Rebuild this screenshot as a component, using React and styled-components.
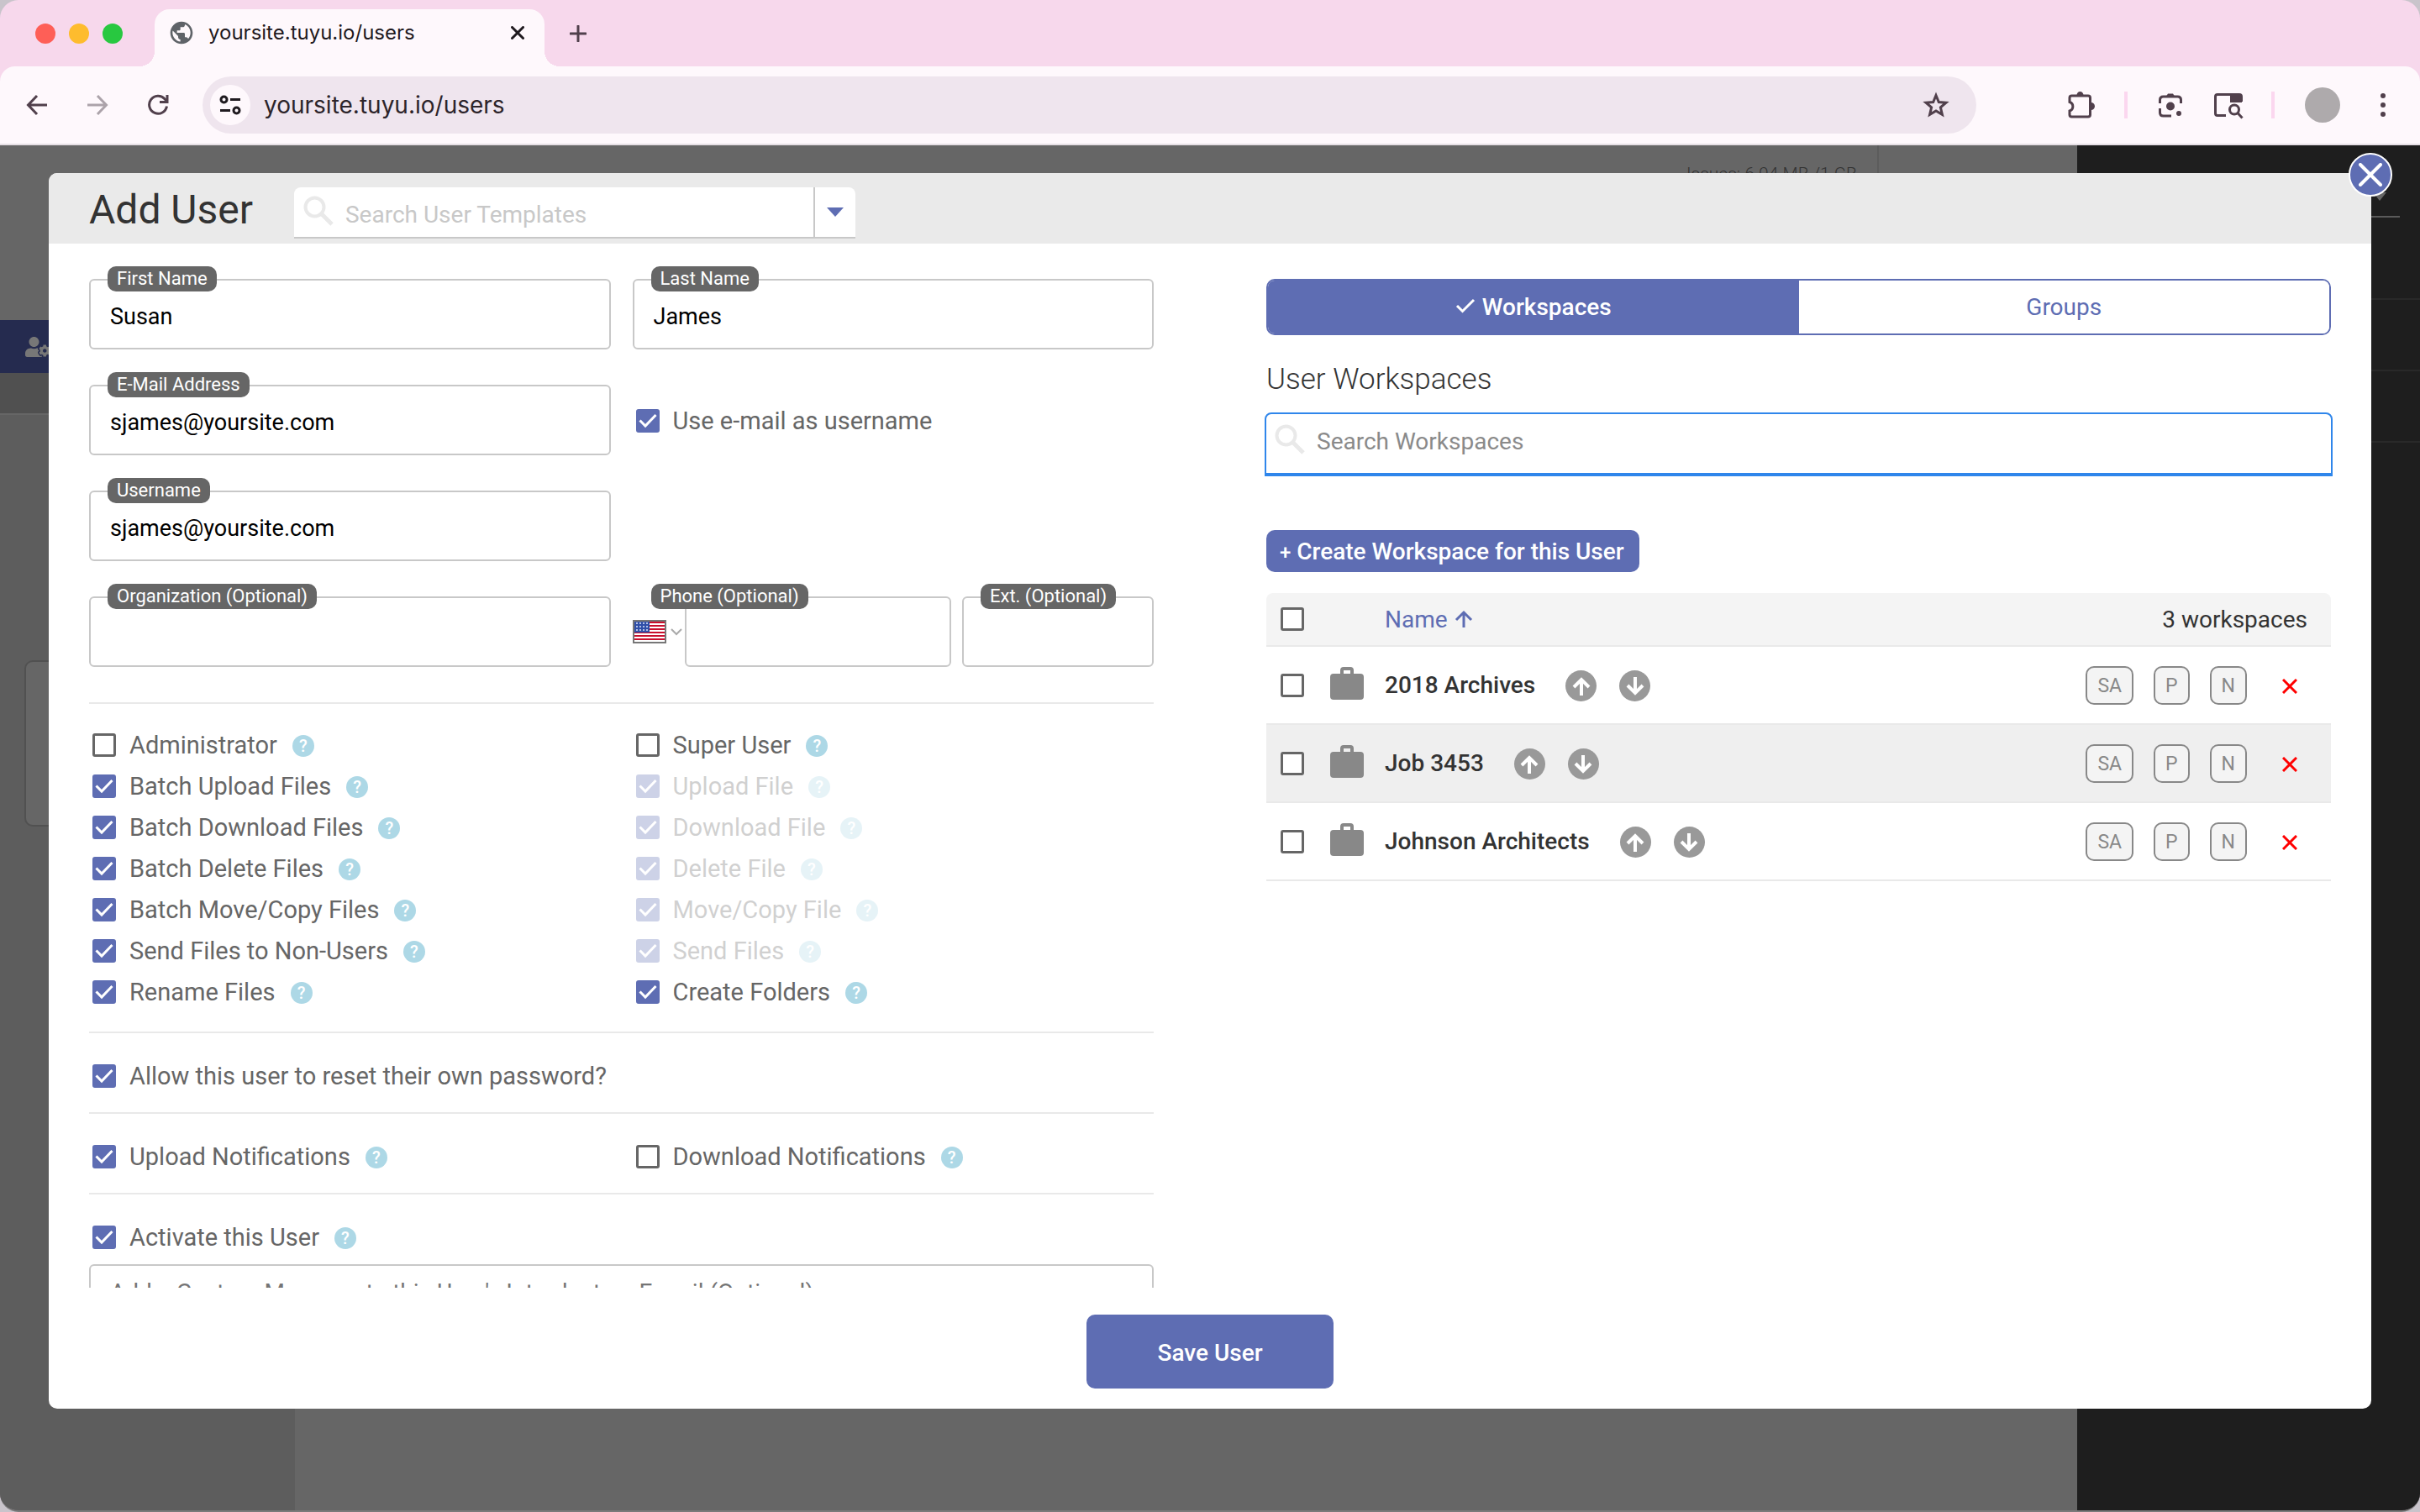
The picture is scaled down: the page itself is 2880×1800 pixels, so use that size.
import React from 'react';
import styled, { createGlobalStyle } from 'styled-components';
import { FaUserCog } from 'react-icons/fa';
import { MdPublic } from 'react-icons/md';

const permissions = [
  [
    { label: 'Administrator' },
    { label: 'Batch Upload Files', checked: true },
    { label: 'Batch Download Files', checked: true },
    { label: 'Batch Delete Files', checked: true },
    { label: 'Batch Move/Copy Files', checked: true },
    { label: 'Send Files to Non-Users', checked: true },
    { label: 'Rename Files', checked: true },
  ],
  [
    { label: 'Super User' },
    { label: 'Upload File', checked: true, disabled: true },
    { label: 'Download File', checked: true, disabled: true },
    { label: 'Delete File', checked: true, disabled: true },
    { label: 'Move/Copy File', checked: true, disabled: true },
    { label: 'Send Files', checked: true, disabled: true },
    { label: 'Create Folders', checked: true },
  ],
];

const workspaces = ['2018 Archives', 'Job 3453', 'Johnson Architects'];

export default function App() {
  return (
    <>
      <GlobalStyle />
      <BrowserWindow>
        <TabStrip />
        <Toolbar />
        <Page>
          <PageBackground />
          <Overlay>
            <AddUserModal />
          </Overlay>
        </Page>
      </BrowserWindow>
    </>
  );
}

function TabStrip() {
  return (
    <Strip>
      <Lights>
        <Light $color="#fe5f57" />
        <Light $color="#febc2e" />
        <Light $color="#28c840" />
      </Lights>
      <Tab>
        <MdPublic size={32} color="#5f6368" />
        <TabTitle>yoursite.tuyu.io/users</TabTitle>
        <IconButton aria-label="Close tab">
          <svg width="16" height="16" viewBox="0 0 16 16" stroke="#1f1a1f" strokeWidth="3" strokeLinecap="round">
            <path d="M1.500 1.500l13 13M14.500 1.500l-13 13" />
          </svg>
        </IconButton>
      </Tab>
      <NewTab aria-label="New tab">
        <svg width="20" height="20" viewBox="0 0 20 20" stroke="#51404c" strokeWidth="3" strokeLinecap="round">
          <path d="M10 1v18M1 10h18" />
        </svg>
      </NewTab>
    </Strip>
  );
}

function Toolbar() {
  return (
    <Bar>
      <NavButtons>
        <IconButton aria-label="Back">
          <svg width="26" height="26" viewBox="0 0 26 26" fill="none" stroke="#51404c" strokeWidth="3">
            <path d="M25 13H3M13 2L2.500 13 13 24" />
          </svg>
        </IconButton>
        <IconButton aria-label="Forward">
          <svg width="26" height="26" viewBox="0 0 26 26" fill="none" stroke="#aca3aa" strokeWidth="3">
            <path d="M1 13h22M13 2l10.500 11L13 24" />
          </svg>
        </IconButton>
        <IconButton aria-label="Reload">
          <svg width="26" height="26" viewBox="0 0 26 26" fill="none" stroke="#51404c" strokeWidth="3">
            <path d="M23.500 14.500A10.500 10.500 0 1 1 21 5.800L23.500 8.500" />
            <path d="M24 1v8.500h-9" />
          </svg>
        </IconButton>
      </NavButtons>
      <AddressBar>
        <SiteInfo aria-label="View site information">
          <svg width="28" height="28" viewBox="0 0 28 28" fill="none" stroke="#1f1a1f" strokeWidth="3">
            <circle cx="6.500" cy="7.500" r="3.500" />
            <path d="M14 7.500h12M2 20.500h12" />
            <circle cx="21.500" cy="20.500" r="3.500" />
          </svg>
        </SiteInfo>
        <AddressInput aria-label="Address" defaultValue="yoursite.tuyu.io/users" />
        <IconButton aria-label="Bookmark this page">
          <svg width="32" height="32" viewBox="0 0 32 32" fill="none" stroke="#51404c" strokeWidth="3">
            <path d="M16 4.500l3.300 8 8.700.7-6.600 5.700 2 8.500L16 22.900l-7.400 4.500 2-8.500L4 13.200l8.700-.7z" />
          </svg>
        </IconButton>
      </AddressBar>
      <ToolbarActions>
        <IconButton aria-label="Extensions">
          <svg width="36" height="36" viewBox="0 0 36 36">
            <path
              d="M4 9.500Q4 7 6.500 7H26q2.500 0 2.500 2.500V29.500Q28.500 32 26 32H6.500Q4 32 4 29.500V25a5.500 5.500 0 0 0 0-10.500z"
              fill="none"
              stroke="#51404c"
              strokeWidth="3"
            />
            <path d="M12.500 6.500a4 4.500 0 0 1 8 0zM29.500 15a4.500 4.500 0 0 1 0 9z" fill="#51404c" />
          </svg>
        </IconButton>
        <ToolbarRule />
        <IconButton aria-label="Search with Lens">
          <svg width="36" height="36" viewBox="-2 -2 36 36" fill="none" stroke="#51404c" strokeWidth="3">
            <path d="M3.500 14V10q0-4 4-4h17q4 0 4 4v4M3.500 20v5q0 4 4 4H17" />
            <path d="M11 5.500l2-3h6l2 3z" fill="#51404c" stroke="none" />
            <circle cx="16" cy="17.500" r="5" fill="#51404c" stroke="none" />
            <circle cx="26" cy="26" r="3" fill="#51404c" stroke="none" />
          </svg>
        </IconButton>
        <IconButton aria-label="Search side panel">
          <svg width="36" height="36" viewBox="0 0 36 36" fill="none" stroke="#51404c" strokeWidth="3">
            <path d="M15 30.500H5q-2.500 0-2.500-2.500V8q0-2.500 2.500-2.500h26q2.500 0 2.500 2.500v6" />
            <path d="M20 5h14v10H20z" fill="#51404c" stroke="none" />
            <circle cx="25" cy="23.500" r="5.500" />
            <path d="M29 27.500l5.500 6" />
          </svg>
        </IconButton>
        <ToolbarRule />
        <Avatar aria-label="Profile" />
        <IconButton aria-label="Browser menu">
          <svg width="8" height="30" viewBox="0 0 8 30" fill="#51404c">
            <circle cx="4" cy="4" r="3" />
            <circle cx="4" cy="15" r="3" />
            <circle cx="4" cy="26" r="3" />
          </svg>
        </IconButton>
      </ToolbarActions>
    </Bar>
  );
}

function PageBackground() {
  return (
    <Backdrop>
      <SideNav>
        <NavItem>
          <FaUserCog size={30} />
        </NavItem>
        <SubNav />
        <SideBody>
          <SideCard />
        </SideBody>
      </SideNav>
      <MainArea>
        <Usage>Issues: 6.04 MB /1 GB</Usage>
      </MainArea>
      <DarkPanel>
        <DarkSelect>
          <svg width="16" height="10" viewBox="0 0 16 10" fill="#666">
            <path d="M0 0h16L8 10z" />
          </svg>
        </DarkSelect>
        <DarkRow />
        <DarkRow />
        <DarkRow />
      </DarkPanel>
    </Backdrop>
  );
}

function AddUserModal() {
  return (
    <Modal role="dialog" aria-labelledby="modal-title">
      <CloseButton aria-label="Close">
        <svg width="28" height="28" viewBox="0 0 28 28" stroke="#fff" strokeWidth="4" strokeLinecap="round">
          <path d="M2 2l24 24M26 2L2 26" />
        </svg>
      </CloseButton>
      <ModalHeader>
        <ModalTitle id="modal-title">Add User</ModalTitle>
        <TemplateSearch>
          <Magnifier />
          <TemplateInput aria-label="Search User Templates" placeholder="Search User Templates" />
          <TemplateToggle aria-label="Show templates">
            <svg width="20" height="11" viewBox="0 0 20 11" fill="#5e6db3">
              <path d="M0 0h20L10 11z" />
            </svg>
          </TemplateToggle>
        </TemplateSearch>
      </ModalHeader>
      <ModalBody>
        <UserForm />
        <WorkspacePanel />
      </ModalBody>
      <ModalFooter>
        <SaveButton>Save User</SaveButton>
      </ModalFooter>
    </Modal>
  );
}

function UserForm() {
  return (
    <Form>
      <FieldGrid>
        <Field id="first-name" label="First Name" value="Susan" />
        <Field id="last-name" label="Last Name" value="James" />
        <Field id="email" label="E-Mail Address" value="sjames@yoursite.com" />
        <CheckOption id="email-username" label="Use e-mail as username" checked noHelp />
        <Field id="username" label="Username" value="sjames@yoursite.com" />
        <span />
        <Field id="organization" label="Organization (Optional)" />
        <PhoneGroup>
          <FieldLabel htmlFor="phone">Phone (Optional)</FieldLabel>
          <CountryButton aria-label="Country: United States">
            <UsFlag />
            <svg width="14" height="9" viewBox="0 0 14 9" fill="none" stroke="#aaa" strokeWidth="2">
              <path d="M1 1l6 6 6-6" />
            </svg>
          </CountryButton>
          <PhoneInput id="phone" type="tel" />
          <ExtField>
            <Field id="ext" label="Ext. (Optional)" />
          </ExtField>
        </PhoneGroup>
      </FieldGrid>

      <PermissionSection>
        {permissions.map((column, index) => (
          <div key={index}>
            {column.map((item) => (
              <CheckOption key={item.label} id={item.label.toLowerCase().replace(/\W+/g, '-')} {...item} />
            ))}
          </div>
        ))}
      </PermissionSection>

      <Section>
        <CheckOption id="reset" label="Allow this user to reset their own password?" checked noHelp />
      </Section>
      <Section>
        <CheckOption id="upload-notifications" label="Upload Notifications" checked />
        <CheckOption id="download-notifications" label="Download Notifications" />
      </Section>
      <Section>
        <CheckOption id="activate" label="Activate this User" checked />
      </Section>
      <Message
        aria-label="Custom message"
        placeholder="Add a Custom Message to this User's Introductory E-mail (Optional)"
      />
    </Form>
  );
}

function WorkspacePanel() {
  return (
    <Panel>
      <Switcher>
        <SwitchButton $active>
          <svg width="24" height="18" viewBox="0 0 24 18" fill="none" stroke="#fff" strokeWidth="3">
            <path d="M2 9l6.500 6.500L22 2" />
          </svg>
          Workspaces
        </SwitchButton>
        <SwitchButton>Groups</SwitchButton>
      </Switcher>
      <PanelTitle>User Workspaces</PanelTitle>
      <WorkspaceSearch>
        <Magnifier />
        <SearchInput aria-label="Search Workspaces" placeholder="Search Workspaces" />
      </WorkspaceSearch>
      <CreateButton>
        <Plus>+</Plus> Create Workspace for this User
      </CreateButton>
      <Table>
        <thead>
          <tr>
            <HeadCell $width={76}>
              <Check id="all" label="Select all" />
            </HeadCell>
            <HeadCell $width={65} />
            <HeadCell>
              <SortButton>
                Name
                <svg width="22" height="22" viewBox="0 0 22 22" fill="none" stroke="#5e6db3" strokeWidth="3">
                  <path d="M11 21V3M2 12l9-9 9 9" />
                </svg>
              </SortButton>
            </HeadCell>
            <HeadCell $right>3 workspaces</HeadCell>
          </tr>
        </thead>
        <tbody>
          {workspaces.map((name) => (
            <Row key={name}>
              <Cell>
                <Check id={name} label={`Select ${name}`} />
              </Cell>
              <Cell>
                <Briefcase />
              </Cell>
              <Cell>
                <NameGroup>
                  <WorkspaceName>{name}</WorkspaceName>
                  <RoundButton aria-label={`Upload to ${name}`}>
                    <svg width="22" height="22" viewBox="0 0 22 22" fill="none" stroke="#fff" strokeWidth="4">
                      <path d="M11 22V4M2 12l9-9 9 9" />
                    </svg>
                  </RoundButton>
                  <RoundButton aria-label={`Download from ${name}`}>
                    <svg width="22" height="22" viewBox="0 0 22 22" fill="none" stroke="#fff" strokeWidth="4">
                      <path d="M11 0v18M2 10l9 9 9-9" />
                    </svg>
                  </RoundButton>
                </NameGroup>
              </Cell>
              <Cell>
                <Roles>
                  <RoleButton>SA</RoleButton>
                  <RoleButton>P</RoleButton>
                  <RoleButton>N</RoleButton>
                  <RemoveButton aria-label={`Remove ${name}`}>
                    <svg width="18" height="18" viewBox="0 0 18 18" stroke="#f00" strokeWidth="3">
                      <path d="M1 1l16 16M17 1L1 17" />
                    </svg>
                  </RemoveButton>
                </Roles>
              </Cell>
            </Row>
          ))}
        </tbody>
      </Table>
    </Panel>
  );
}

function Field({ id, label, value }) {
  return (
    <FieldBox>
      <FieldLabel htmlFor={id}>{label}</FieldLabel>
      <FieldInput id={id} defaultValue={value} />
    </FieldBox>
  );
}

function Check({ id, label, checked, disabled }) {
  return (
    <CheckBox>
      <CheckInput type="checkbox" id={id} aria-label={label} defaultChecked={checked} disabled={disabled} />
      <CheckMark width="28" height="28" viewBox="0 0 28 28" fill="none" stroke="#fff" strokeWidth="3">
        <path d="M4.500 13.500l6.500 6.500L23.500 7" />
      </CheckMark>
    </CheckBox>
  );
}

function CheckOption({ id, label, checked, disabled, noHelp }) {
  return (
    <Option $disabled={disabled}>
      <Check id={id} label={label} checked={checked} disabled={disabled} />
      <OptionLabel htmlFor={id}>{label}</OptionLabel>
      {!noHelp && <HelpButton aria-label={`Help: ${label}`}>?</HelpButton>}
    </Option>
  );
}

function Magnifier() {
  return (
    <MagnifierIcon width="36" height="36" viewBox="0 0 36 36" fill="none" stroke="#e9e9e9">
      <circle cx="13.500" cy="13.500" r="11" strokeWidth="4" />
      <path d="M22 22l12 12" strokeWidth="5" />
    </MagnifierIcon>
  );
}

function Briefcase() {
  return (
    <BriefcaseIcon width="40" height="39" viewBox="0 0 40 39">
      <rect y="8" width="40" height="31" rx="4" fill="#888" />
      <path d="M14 9V4q0-2 2-2h8q2 0 2 2v5" fill="none" stroke="#888" strokeWidth="4" />
    </BriefcaseIcon>
  );
}

function UsFlag() {
  return (
    <svg width="40" height="28" viewBox="0 0 40 28">
      <rect width="40" height="28" fill="#777" />
      <rect x="2" y="2" width="36" height="24" fill="#fff" />
      {[2, 6, 10, 14, 18, 22].map((y) => (
        <rect key={y} x="2" y={y} width="36" height="2" fill="#c8102e" />
      ))}
      <rect x="2" y="2" width="18" height="13" fill="#2f4fa8" />
      {[4, 8, 12].map((y) =>
        [4, 8, 12, 16].map((x) => <circle key={`${x}-${y}`} cx={x + 1} cy={y} r="1" fill="#dfe6fa" />)
      )}
    </svg>
  );
}

const GlobalStyle = createGlobalStyle`
  * {
    box-sizing: border-box;
  }

  body {
    margin: 0;
    background: #c9c4cb;
    font-family: Roboto, 'Liberation Sans', sans-serif;
    color: #333;
  }

  button,
  input,
  textarea {
    font: inherit;
    color: inherit;
  }

  button {
    padding: 0;
    border: 0;
    background: none;
    cursor: pointer;
  }

  svg {
    display: block;
    flex: none;
  }
`;

const BrowserWindow = styled.div`
  display: flex;
  flex-direction: column;
  height: 100vh;
  overflow: hidden;
  border-bottom: 2px solid #7b7b7b;
  border-radius: 22px;
  background: #f7d8ec;
`;

const Strip = styled.div`
  display: flex;
  align-items: center;
  height: 79px;
  padding-left: 42px;
  font-family: Inter, sans-serif;
`;

const Lights = styled.div`
  display: flex;
  gap: 16px;
  margin-right: 38px;
`;

const Light = styled.span`
  width: 24px;
  height: 24px;
  border-radius: 50%;
  background: ${props => props.$color};
`;

const Tab = styled.div`
  position: relative;
  display: flex;
  align-items: center;
  align-self: flex-end;
  gap: 16px;
  width: 464px;
  height: 68px;
  padding: 0 24px 12px 16px;
  border-radius: 18px 18px 0 0;
  background: #fef8fc;

  &::before,
  &::after {
    content: '';
    position: absolute;
    bottom: 0;
    width: 18px;
    height: 18px;
  }

  &::before {
    right: 100%;
    background: radial-gradient(circle at 0 0, transparent 18px, #fef8fc 18px);
  }

  &::after {
    left: 100%;
    background: radial-gradient(circle at 100% 0, transparent 18px, #fef8fc 18px);
  }
`;

const TabTitle = styled.span`
  flex: 1;
  font-size: 24px;
  line-height: 32px;
  color: #1f1a1f;
`;

const IconButton = styled.button`
  display: grid;
  place-items: center;
  flex: none;
`;

const NewTab = styled(IconButton)`
  margin-left: 30px;
`;

const Bar = styled.div`
  display: flex;
  align-items: center;
  height: 94px;
  padding: 0 40px 0 31px;
  border-bottom: 2px solid #e6dfe5;
  border-radius: 18px 18px 0 0;
  background: #fef8fc;
`;

const NavButtons = styled.div`
  display: flex;
  gap: 46px;
  margin-right: 40px;
`;

const AddressBar = styled.div`
  display: flex;
  align-items: center;
  flex: 1;
  height: 68px;
  padding: 0 32px 0 9px;
  border-radius: 34px;
  background: #efe5ee;
`;

const SiteInfo = styled(IconButton)`
  width: 48px;
  height: 48px;
  border-radius: 50%;
  background: #fef8fc;
`;

const AddressInput = styled.input`
  flex: 1;
  min-width: 0;
  padding: 0 16px;
  border: 0;
  outline: 0;
  background: none;
  font-family: Inter, sans-serif;
  font-size: 28px;
  line-height: 36px;
  color: #2c242a;
`;

const ToolbarActions = styled.div`
  display: flex;
  align-items: center;
  gap: 33px;
  margin-left: 107px;
`;

const ToolbarRule = styled.span`
  width: 4px;
  height: 32px;
  background: #fbd7ef;
`;

const Avatar = styled.button`
  width: 42px;
  height: 42px;
  margin-right: 14px;
  margin-left: 3px;
  border-radius: 50%;
  background: #aeaaac;
`;

const Page = styled.div`
  position: relative;
  display: flex;
  flex: 1;
  min-height: 0;
`;

const Backdrop = styled.div`
  display: flex;
  flex: 1;
  background: #666;
`;

const SideNav = styled.div`
  display: flex;
  flex-direction: column;
  width: 351px;
  padding-top: 208px;
`;

const NavItem = styled.div`
  display: flex;
  align-items: center;
  height: 63px;
  padding-left: 30px;
  background: #252b4f;
  color: #777;
`;

const SubNav = styled.div`
  height: 50px;
  border-bottom: 2px solid #666;
  background: #505050;
`;

const SideBody = styled.div`
  flex: 1;
  padding: 292px 0 0 29px;
  background: #5d5d5d;
`;

const SideCard = styled.div`
  height: 198px;
  border: 2px solid #515151;
  border-radius: 10px;
  background: #666;
`;

const MainArea = styled.div`
  display: flex;
  flex: 1;
  justify-content: flex-end;
  padding-right: 236px;
`;

const Usage = styled.div`
  height: 60px;
  padding: 20px 24px 0 0;
  border-right: 2px solid #5c5c5c;
  font-size: 21px;
  font-weight: 300;
  line-height: 28px;
  color: #333;
`;

const DarkPanel = styled.div`
  width: 408px;
  background: #1e1e1e;
`;

const DarkSelect = styled.div`
  display: flex;
  justify-content: flex-end;
  height: 86px;
  margin: 0 24px 13px;
  padding-top: 56px;
  padding-right: 16px;
  border-bottom: 2px solid #5a5a5a;
`;

const DarkRow = styled.div`
  height: 85px;
  border-bottom: 2px solid #292929;
`;

const Overlay = styled.div`
  position: absolute;
  inset: 0;
  display: flex;
  padding: 33px 58px 121px;
`;

const Modal = styled.section`
  position: relative;
  display: flex;
  flex-direction: column;
  flex: 1;
  border-radius: 10px;
  background: #fff;
`;

const CloseButton = styled.button`
  position: absolute;
  top: -24px;
  right: -25px;
  display: grid;
  place-items: center;
  width: 52px;
  height: 52px;
  border: 2px solid #fff;
  border-radius: 50%;
  background: #5e6db3;
`;

const ModalHeader = styled.header`
  display: flex;
  align-items: flex-end;
  gap: 49px;
  height: 84px;
  padding: 0 48px 6px;
  border-radius: 10px 10px 0 0;
  background: #eaeaea;
`;

const ModalTitle = styled.h1`
  margin: 0;
  font-size: 48px;
  font-weight: 400;
  line-height: 68px;
`;

const TemplateSearch = styled.div`
  display: flex;
  align-items: center;
  width: 668px;
  height: 61px;
  padding-left: 11px;
  border-bottom: 2px solid #c8c8c8;
  border-radius: 8px 8px 0 0;
  background: #fff;
`;

const MagnifierIcon = styled.svg`
  margin-bottom: 4px;
`;

const SearchInput = styled.input`
  flex: 1;
  min-width: 0;
  height: 100%;
  padding: 0 14px;
  border: 0;
  outline: 0;
  background: none;
  font-size: 28px;
  color: #333;

  &::placeholder {
    color: #8a8a8a;
    opacity: 1;
  }
`;

const TemplateInput = styled(SearchInput)`
  padding-top: 6px;

  &::placeholder {
    color: #c8c8c8;
  }
`;

const TemplateToggle = styled.button`
  display: grid;
  place-items: center;
  width: 50px;
  height: 100%;
  border-left: 2px solid #c8c8c8;
`;

const ModalBody = styled.div`
  display: grid;
  grid-template-columns: repeat(2, minmax(0, 1fr));
  gap: 134px;
  flex: 1;
  min-height: 0;
  padding: 0 48px;
  overflow: hidden;
`;

const ModalFooter = styled.footer`
  display: flex;
  justify-content: center;
  padding: 32px 0 24px;
`;

const SaveButton = styled.button`
  width: 294px;
  height: 88px;
  padding-top: 2px;
  border-radius: 10px;
  background: #5e6db3;
  font-size: 28px;
  font-weight: 500;
  color: #fff;
`;

const Form = styled.form`
  padding-top: 42px;
`;

const FieldGrid = styled.div`
  display: grid;
  grid-template-columns: repeat(2, minmax(0, 1fr));
  gap: 42px 26px;
  margin-bottom: 42px;
`;

const FieldBox = styled.div`
  position: relative;
`;

const FieldLabel = styled.label`
  position: absolute;
  top: -15px;
  left: 22px;
  padding: 0 11px;
  border-radius: 10px;
  background: #666;
  font-size: 22px;
  line-height: 30px;
  white-space: nowrap;
  color: #fff;
`;

const FieldInput = styled.input`
  display: block;
  width: 100%;
  height: 84px;
  padding: 5px 24px 0 23px;
  border: 2px solid #c8c8c8;
  border-radius: 6px;
  outline: 0;
  background: #fff;
  font-size: 27px;
  color: #000;
`;

const PhoneGroup = styled.div`
  position: relative;
  display: flex;
`;

const CountryButton = styled.button`
  display: flex;
  align-items: center;
  gap: 5px;
  width: 62px;
`;

const PhoneInput = styled(FieldInput)`
  flex: 1;
  width: auto;
  min-width: 0;
`;

const ExtField = styled.div`
  width: 228px;
  margin-left: 13px;
`;

const Section = styled.div`
  display: grid;
  grid-template-columns: repeat(2, minmax(0, 1fr));
  column-gap: 26px;
  padding: 26px 0 19px;
  border-top: 2px solid #e9e9e9;

  &:last-of-type {
    padding-bottom: 8px;
  }
`;

const PermissionSection = styled(Section)`
  padding: 24px 0 23px;
`;

const Option = styled.div`
  display: flex;
  align-items: center;
  height: 49px;
  padding-left: 4px;
  opacity: ${props => props.$disabled ? 0.3 : 1};

  ${FieldGrid} > & {
    height: 84px;
    padding-top: 2px;
  }
`;

const OptionLabel = styled.label`
  margin: 0 18px 0 16px;
  font-size: 29px;
  line-height: 36px;
  white-space: nowrap;
  color: #666;
`;

const HelpButton = styled.button`
  width: 26px;
  height: 26px;
  margin-top: 2px;
  border-radius: 50%;
  background: #add8e6;
  font-size: 20px;
  font-weight: 500;
  line-height: 26px;
  color: #fff;
`;

const CheckBox = styled.span`
  display: grid;
  flex: none;
  width: 28px;
  height: 28px;
`;

const CheckInput = styled.input`
  grid-area: 1 / 1;
  appearance: none;
  width: 28px;
  height: 28px;
  margin: 0;
  border: 3px solid #666;
  border-radius: 3px;
  background: #fff;

  &:checked {
    border-color: #5e6db3;
    background: #5e6db3;
  }
`;

const CheckMark = styled.svg`
  grid-area: 1 / 1;
  pointer-events: none;
`;

const Message = styled.textarea`
  display: block;
  width: 100%;
  height: 160px;
  padding: 14px 23px;
  border: 2px solid #c8c8c8;
  border-radius: 6px;
  outline: 0;
  resize: none;
  font-size: 28px;
  line-height: 36px;

  &::placeholder {
    color: #757575;
  }
`;

const Panel = styled.div`
  padding-top: 42px;
`;

const Switcher = styled.div`
  display: flex;
  height: 67px;
  overflow: hidden;
  border: 2px solid #5e6db3;
  border-radius: 10px;
`;

const SwitchButton = styled.button`
  display: flex;
  align-items: center;
  justify-content: center;
  gap: 8px;
  flex: 1;
  background: ${props => props.$active ? '#5e6db3' : '#fff'};
  font-size: 28px;
  font-weight: ${props => props.$active ? 500 : 400};
  color: ${props => props.$active ? '#fff' : '#5e6db3'};

  svg {
    margin-bottom: 4px;
  }
`;

const PanelTitle = styled.h2`
  margin: 31px 0 17px;
  font-size: 35px;
  font-weight: 300;
  line-height: 44px;
`;

const WorkspaceSearch = styled.div`
  display: flex;
  align-items: center;
  height: 76px;
  margin: 0 -2px 64px;
  padding-left: 10px;
  padding-bottom: 6px;
  border: 2px solid #2f86eb;
  border-bottom-width: 4px;
  border-radius: 8px 8px 0 0;
`;

const CreateButton = styled.button`
  display: block;
  height: 50px;
  margin-bottom: 25px;
  padding: 0 18px 0 16px;
  border-radius: 10px;
  background: #5e6db3;
  font-size: 28px;
  font-weight: 500;
  color: #fff;
`;

const Plus = styled.span`
  font-size: 24px;
`;

const Table = styled.table`
  width: 100%;
  border-collapse: separate;
  border-spacing: 0;
  font-size: 28px;
`;

const HeadCell = styled.th`
  width: ${props => props.$width ? `${props.$width}px` : 'auto'};
  height: 64px;
  padding: 0;
  border-bottom: 2px solid #e9e9e9;
  background: #f4f4f4;
  font-weight: 400;
  text-align: ${props => props.$right ? 'right' : 'left'};

  &:first-child {
    padding-left: 17px;
    border-radius: 8px 0 0 0;
  }

  &:last-child {
    padding-right: 28px;
    border-radius: 0 8px 0 0;
  }
`;

const Row = styled.tr`
  background: #fff;

  &:nth-child(even) {
    background: #efefef;
  }
`;

const Cell = styled.td`
  height: 93px;
  padding: 0;
  border-bottom: 2px solid #e9e9e9;

  &:first-child {
    padding-left: 17px;
  }

  &:last-child {
    padding-right: 36px;
  }
`;

const SortButton = styled.button`
  display: flex;
  align-items: center;
  gap: 8px;
  color: #5e6db3;
`;

const BriefcaseIcon = styled.svg`
  margin-bottom: 4px;
`;

const NameGroup = styled.div`
  display: flex;
  align-items: center;
`;

const WorkspaceName = styled.span`
  margin-right: 9px;
  font-weight: 500;
`;

const RoundButton = styled.button`
  display: grid;
  place-items: center;
  width: 37px;
  height: 37px;
  margin-top: 2px;
  margin-left: 27px;
  border-radius: 50%;
  background: #999;
`;

const Roles = styled.div`
  display: flex;
  align-items: center;
  justify-content: flex-end;
  gap: 24px;
`;

const RoleButton = styled.button`
  height: 46px;
  padding: 2px 12px 0;
  border: 2px solid #888;
  border-radius: 10px;
  background: #f4f4f4;
  font-size: 23px;
  color: #888;
`;

const RemoveButton = styled(IconButton)`
  width: 26px;
  height: 26px;
  margin-top: 2px;
  margin-left: 14px;
`;
